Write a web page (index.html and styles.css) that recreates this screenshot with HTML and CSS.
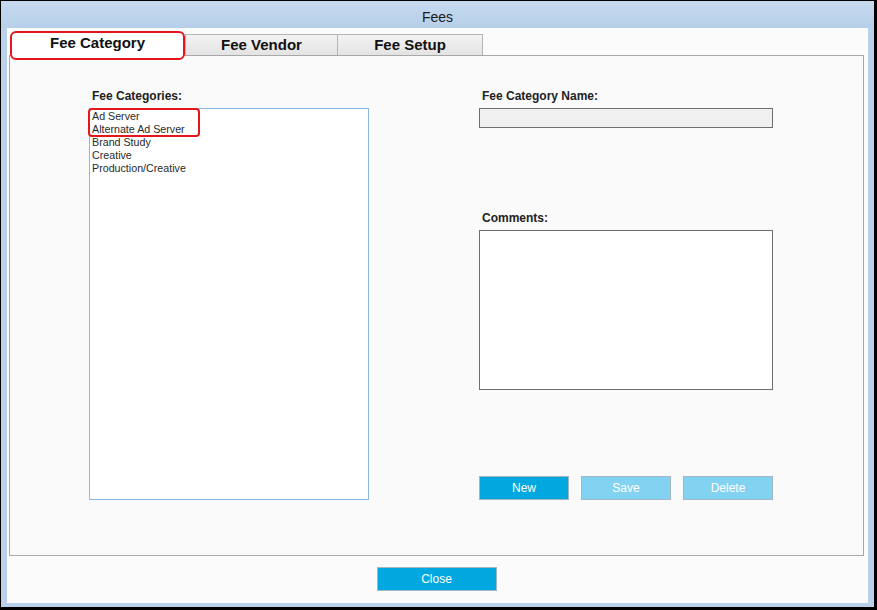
FILE: index.html
```html
<!DOCTYPE html>
<html>
<head>
<meta charset="utf-8">
<title>Fees</title>
<link rel="stylesheet" href="styles.css">
</head>
<body>
<div class="window">
  <div class="titlebar">Fees</div>
  <div class="client">
    <div class="tabs">
      <div class="tab tab-active">Fee Category</div>
      <div class="tab tab-vendor">Fee Vendor</div>
      <div class="tab tab-setup">Fee Setup</div>
    </div>
    <div class="panel">
      <div class="col col-left">
        <div class="label">Fee Categories:</div>
        <div class="listwrap">
          <ul class="listbox">
            <li>Ad Server</li>
            <li>Alternate Ad Server</li>
            <li>Brand Study</li>
            <li>Creative</li>
            <li>Production/Creative</li>
          </ul>
          <div class="highlight"></div>
        </div>
      </div>
      <div class="col col-right">
        <div class="label">Fee Category Name:</div>
        <div class="textbox"></div>
        <div class="label label-comments">Comments:</div>
        <div class="textarea"></div>
        <div class="buttons">
          <div class="btn btn-primary">New</div>
          <div class="btn btn-disabled">Save</div>
          <div class="btn btn-disabled">Delete</div>
        </div>
      </div>
    </div>
    <div class="footer">
      <div class="btn btn-primary btn-close">Close</div>
    </div>
  </div>
</div>
</body>
</html>
```
FILE: styles.css
```css
* { box-sizing: border-box; }
html, body { margin: 0; padding: 0; }
body {
  background: #000;
  width: 877px;
  height: 610px;
  padding: 1px 3px 3px 1px;
  font-family: "Liberation Sans", Arial, sans-serif;
}
.window {
  width: 873px;
  height: 606px;
  background: #b9d1ea;
  padding: 0 6px 4px 6px;
  display: flex;
  flex-direction: column;
}
.titlebar {
  height: 27px;
  margin: 0 -6px;
  background: linear-gradient(#c6daef, #b6cfe9);
  text-align: center;
  font-size: 14px;
  line-height: 20px;
  padding-top: 6px;
  color: #1a1a1a;
}
.client {
  flex: 1;
  background: #fbfbfb;
  padding: 0 4px 0 2px;
  display: flex;
  flex-direction: column;
}
.tabs {
  height: 27px;
  display: flex;
  align-items: flex-end;
  position: relative;
  z-index: 2;
}
.tab {
  height: 21px;
  border: 1px solid #b5b5b5;
  border-bottom: none;
  background: linear-gradient(#f3f3f3, #e3e3e3);
  font-weight: bold;
  font-size: 15px;
  text-align: center;
  line-height: 19px;
  color: #111;
}
.tab-active {
  align-self: flex-start;
  margin-top: 3px;
  margin-left: 1px;
  margin-bottom: -5px;
  width: 175px;
  height: 29px;
  background: #fff;
  border: 2px solid #e3171b;
  border-radius: 6px;
  line-height: 20px;
  padding-bottom: 5px;
}
.tab-vendor { width: 153px; }
.tab-setup { width: 145px; border-left: none; }
.panel {
  width: 855px;
  height: 501px;
  border: 1px solid #a8a8a8;
  background: #fafafa;
  display: flex;
  padding: 33px 0 0 79px;
  gap: 110px;
}
.col { display: flex; flex-direction: column; }
.col-left { width: 280px; }
.col-right { width: 294px; }
.label {
  font-size: 12px;
  font-weight: bold;
  line-height: 14px;
  height: 14px;
  color: #222;
  padding-left: 3px;
  margin-bottom: 5px;
}
.listwrap { position: relative; }
.listbox {
  list-style: none;
  margin: 0;
  width: 280px;
  height: 392px;
  border: 1px solid #8db8e2;
  background: #fff;
  padding: 1px 2px;
  font-size: 10.7px;
  line-height: 13px;
  color: #2a2a2a;
}
.highlight {
  position: absolute;
  left: -1px;
  top: 0;
  width: 112px;
  height: 29px;
  border: 2px solid #e3171b;
  border-radius: 4px;
}
.textbox {
  height: 20px;
  border: 1px solid #6e6e6e;
  background: #f0f0f0;
}
.label-comments { margin-top: 83px; }
.textarea {
  height: 160px;
  border: 1px solid #6e6e6e;
  background: #fff;
}
.buttons {
  margin-top: 86px;
  display: flex;
  gap: 12px;
}
.btn {
  width: 90px;
  height: 24px;
  font-size: 12px;
  line-height: 22px;
  text-align: center;
  color: #fff;
  border: 1px solid #a3b6c4;
}
.btn-primary { background: #00a8df; }
.btn-disabled { background: #82d3f1; }
.footer {
  display: flex;
  justify-content: center;
  margin-top: 11px;
}
.btn-close { width: 120px; }
```
